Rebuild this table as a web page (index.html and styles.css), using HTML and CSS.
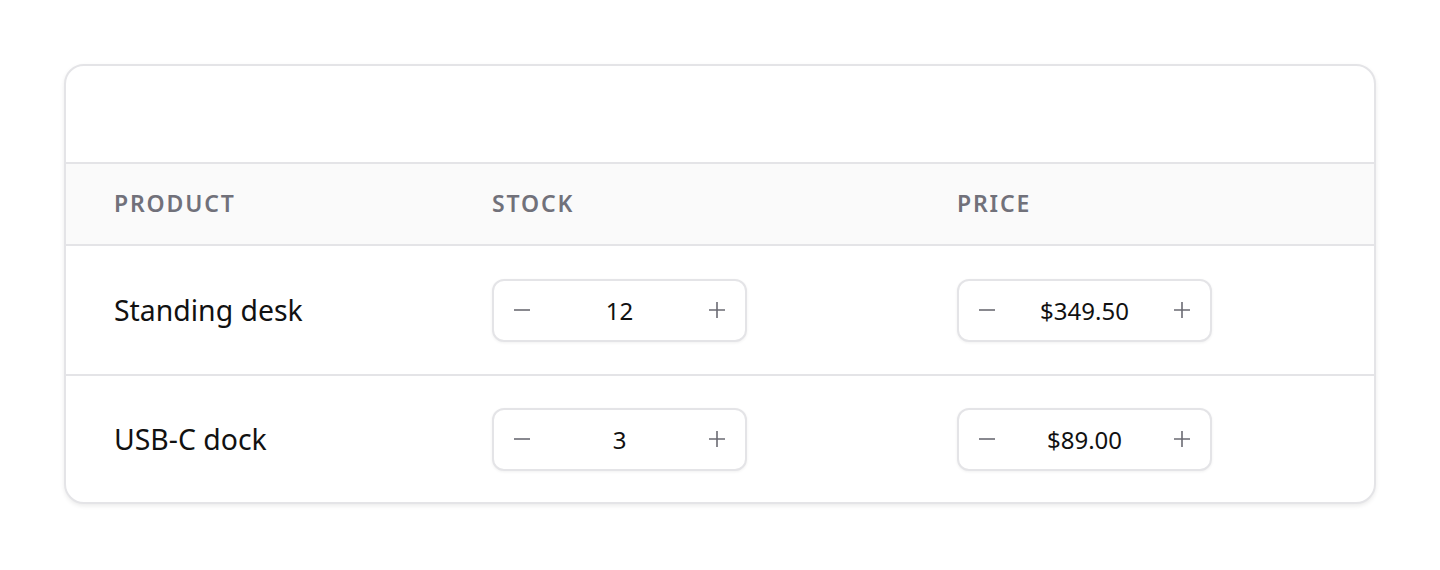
FILE: index.html
```html
<!DOCTYPE html>
<html lang="en">
<head>
    <meta charset="UTF-8">
    <meta name="viewport" content="width=device-width, initial-scale=1.0">
    <title>Inventory</title>
    <link rel="stylesheet" href="styles.css">
</head>
<body class="body">
    <div class="card">
        <div class="card-top"></div>
        <div class="row head">
            <div class="cell">Product</div>
            <div class="cell">Stock</div>
            <div class="cell">Price</div>
        </div>
        <div class="row">
            <div class="cell name">Standing desk</div>
            <div class="cell">
                <div class="stepper">
                    <button class="step"><svg viewBox="0 0 16 16"><path d="M0 8H16"/></svg></button>
                    <span class="value">12</span>
                    <button class="step"><svg viewBox="0 0 16 16"><path d="M0 8H16M8 0V16"/></svg></button>
                </div>
            </div>
            <div class="cell">
                <div class="stepper">
                    <button class="step"><svg viewBox="0 0 16 16"><path d="M0 8H16"/></svg></button>
                    <span class="value">$349.50</span>
                    <button class="step"><svg viewBox="0 0 16 16"><path d="M0 8H16M8 0V16"/></svg></button>
                </div>
            </div>
        </div>
        <div class="row last">
            <div class="cell name">USB-C dock</div>
            <div class="cell">
                <div class="stepper">
                    <button class="step"><svg viewBox="0 0 16 16"><path d="M0 8H16"/></svg></button>
                    <span class="value">3</span>
                    <button class="step"><svg viewBox="0 0 16 16"><path d="M0 8H16M8 0V16"/></svg></button>
                </div>
            </div>
            <div class="cell">
                <div class="stepper">
                    <button class="step"><svg viewBox="0 0 16 16"><path d="M0 8H16"/></svg></button>
                    <span class="value">$89.00</span>
                    <button class="step"><svg viewBox="0 0 16 16"><path d="M0 8H16M8 0V16"/></svg></button>
                </div>
            </div>
        </div>
    </div>
</body>
</html>
```

FILE: styles.css
```css
.body {
    margin: 0;
    padding: 64px 64px;
    background-color: #ffffff;
    font-family: "Noto Sans", "Open Sans", sans-serif;
    color: #111111;
}

.card {
    border: 2px solid #e4e4e7;
    border-radius: 20px;
    background-color: #ffffff;
    box-shadow: 0 2px 4px rgba(0, 0, 0, 0.08);
    overflow: hidden;
}

.card-top {
    height: 96px;
}

.row {
    display: grid;
    grid-template-columns: 378px 465px 1fr;
    align-items: center;
    height: 130px;
    box-sizing: border-box;
    border-top: 2px solid #e4e4e7;
}

.row.head {
    height: 82px;
    padding-bottom: 2px;
    background-color: #fafafa;
}

.row.last {
    height: 128px;
}

.cell {
    padding-left: 48px;
}

.head .cell {
    font-size: 23px;
    font-weight: 600;
    letter-spacing: 0.08em;
    text-transform: uppercase;
    color: #71717a;
}

.name {
    font-size: 28.4px;
}

.stepper {
    display: flex;
    align-items: center;
    justify-content: space-between;
    width: 211px;
    height: 59px;
    padding: 0 20px;
    border: 2px solid #e4e4e7;
    border-radius: 12px;
    box-shadow: 0 1px 3px rgba(0, 0, 0, 0.06);
    background-color: #ffffff;
}

.step {
    display: flex;
    align-items: center;
    justify-content: center;
    width: 16px;
    height: 16px;
    border: none;
    background: none;
    padding: 0;
}

.step svg {
    width: 16px;
    height: 16px;
    fill: none;
    stroke: #6b6b73;
    stroke-width: 1.6;
}

.value {
    font-size: 24px;
}
```
